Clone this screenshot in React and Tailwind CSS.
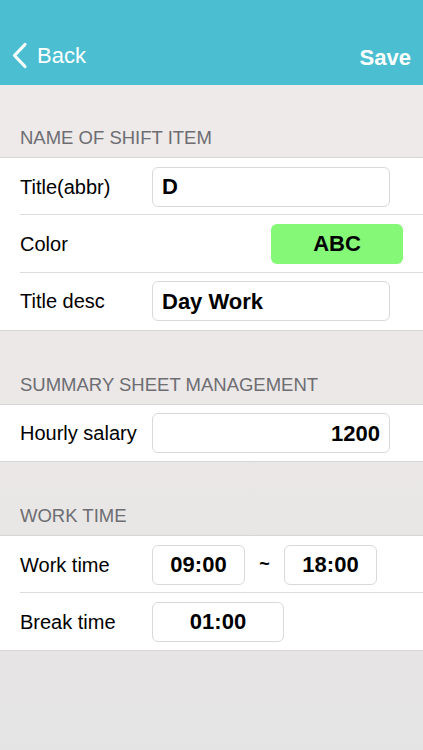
function Row({ label, children, last }) {
  return (
    <div className="relative flex flex-1 items-center pl-5">
      <div className="w-[132px] text-[20px] text-black">{label}</div>
      <div className="flex flex-1 items-center">{children}</div>
      {!last && <div className="absolute bottom-0 left-5 right-0 h-px bg-[#dcdcdc]" />}
    </div>
  );
}

function Field({ children, className = "" }) {
  return (
    <div
      className={`flex h-[40px] items-center rounded-[6px] border border-[#d9d9d9] bg-white px-[9px] text-[22px] font-bold text-black ${className}`}
    >
      {children}
    </div>
  );
}

function SectionHeader({ title, height }) {
  return (
    <div className={`flex items-end px-5 pb-[5px] text-[18.5px] text-[#6d6d72] ${height}`}>{title}</div>
  );
}

export default function App() {
  return (
    <div
      className="flex min-h-[750px] w-[423px] flex-col bg-gradient-to-b from-[#efebea] via-[#ebe8e7] to-[#e5e4e4]"
      style={{ fontFamily: '"Liberation Sans", Arial, sans-serif' }}
    >
      <div className="flex h-[85px] items-end justify-between bg-[#4bbfd1] px-3 pb-[16px] text-white">
        <div className="flex items-center gap-[9px]">
          <svg width="16" height="27" viewBox="0 0 16 27" fill="none">
            <path d="M13 2.5L2.5 13.5L13 24.5" stroke="white" strokeWidth="3.2" strokeLinecap="round" strokeLinejoin="round" />
          </svg>
          <span className="text-[22px] leading-none">Back</span>
        </div>
        <span className="text-[22px] font-bold leading-none">Save</span>
      </div>

      <SectionHeader title="NAME OF SHIFT ITEM" height="h-[72px]" />
      <div className="flex h-[174px] flex-col border-y border-[#d6d6d6] bg-white">
        <Row label="Title(abbr)">
          <Field className="w-[238px]">D</Field>
        </Row>
        <Row label="Color">
          <div className="ml-auto mr-5 flex h-[40px] w-[132px] items-center justify-center rounded-[6px] bg-[#85f877] text-[22px] font-bold text-black">
            ABC
          </div>
        </Row>
        <Row label="Title desc" last>
          <Field className="w-[238px]">Day Work</Field>
        </Row>
      </div>

      <SectionHeader title="SUMMARY SHEET MANAGEMENT" height="h-[73px]" />
      <div className="flex h-[58px] flex-col border-y border-[#d6d6d6] bg-white">
        <Row label="Hourly salary" last>
          <Field className="w-[238px] justify-end">1200</Field>
        </Row>
      </div>

      <SectionHeader title="WORK TIME" height="h-[73px]" />
      <div className="flex h-[116px] flex-col border-y border-[#d6d6d6] bg-white">
        <Row label="Work time">
          <Field className="w-[93px] justify-center">09:00</Field>
          <span className="w-[39px] text-center text-[18px] font-bold">~</span>
          <Field className="w-[93px] justify-center">18:00</Field>
        </Row>
        <Row label="Break time" last>
          <Field className="w-[132px] justify-center">01:00</Field>
        </Row>
      </div>
    </div>
  );
}
